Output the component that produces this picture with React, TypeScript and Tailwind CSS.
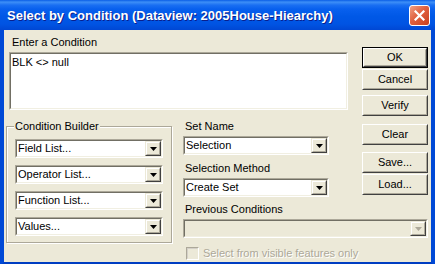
import React from "react";

const F = "font-['Liberation_Sans',Arial,sans-serif]";

function Tri({ disabled }: { disabled?: boolean }) {
  return (
    <svg width="7" height="4" viewBox="0 0 7 4" className="block">
      <path d="M0 0H7L3.5 4Z" fill={disabled ? "#aca899" : "#000"} />
    </svg>
  );
}

function ArrowBtn({ disabled }: { disabled?: boolean }) {
  return (
    <div className="h-full w-[16px] border border-t-[#ece9d8] border-l-[#ece9d8] border-b-[#404040] border-r-[#404040]">
      <div className="flex h-full w-full items-center justify-center border border-t-white border-l-white border-b-[#aca899] border-r-[#aca899] bg-[#ece9d8]">
        <Tri disabled={disabled} />
      </div>
    </div>
  );
}

function Combo({ text, disabled }: { text?: string; disabled?: boolean }) {
  return (
    <div className="flex h-[19px] w-full border border-t-[#aca899] border-l-[#aca899] border-b-white border-r-white">
      <div
        className={`flex min-w-0 flex-1 border border-t-[#716f64] border-l-[#716f64] border-b-[#f1efe2] border-r-[#f1efe2] ${
          disabled ? "bg-[#ece9d8]" : "bg-white"
        }`}
      >
        <div className="min-w-0 flex-1 truncate pl-[1px] text-[11px] leading-[15px] text-black">{text}</div>
        <ArrowBtn disabled={disabled} />
      </div>
    </div>
  );
}

function Btn({ label, def, className = "" }: { label: string; def?: boolean; className?: string }) {
  const inner = (
    <div className="h-full w-full border border-t-white border-l-white border-b-[#404040] border-r-[#404040]">
      <div className="flex h-full w-full items-center justify-center border border-t-[#ece9d8] border-l-[#ece9d8] border-b-[#aca899] border-r-[#aca899] bg-[#ece9d8] text-[11px] text-black">
        {label}
      </div>
    </div>
  );
  return (
    <div className={`h-[21px] w-[66px] ${def ? "border border-black" : ""} ${className}`}>{inner}</div>
  );
}

export default function App() {
  return (
    <div className={`${F} flex h-[264px] w-[435px] flex-col bg-[#0054e3] select-none`}>
      {/* Title bar */}
      <div className="flex h-[30px] shrink-0 items-center bg-[linear-gradient(to_bottom,#0a5ee6_0%,#3d8ff7_7%,#1a6ff2_17%,#0860ee_30%,#0058e6_55%,#0054e3_80%,#0047d4_100%)] pl-[7px] pr-[5px]">
        <div className="flex-1 text-[13px] font-bold leading-none text-white [text-shadow:1px_1px_#0a1f8c]">
          Select by Condition (Dataview: 2005House-Hiearchy)
        </div>
        <div className="flex h-[21px] w-[21px] items-center justify-center rounded-[3px] border border-white bg-[linear-gradient(135deg,#f0a085_0%,#e0603f_45%,#c9401d_100%)]">
          <svg width="11" height="11" viewBox="0 0 11 11">
            <path d="M1.5 1.5L9.5 9.5M9.5 1.5L1.5 9.5" stroke="#fff" strokeWidth="2.2" strokeLinecap="square" />
          </svg>
        </div>
      </div>

      {/* Body */}
      <div className="flex flex-1 border-l-4 border-r-4 border-b-4 border-l-[#0049d6] border-r-[#0049d6] border-b-[#003ec2]">
        <div className="grid flex-1 grid-cols-[166px_11px_165px_14px_66px] grid-rows-[auto_auto_1fr] bg-[#ece9d8] pl-[2px] pt-[6px] text-[11px] leading-[13px] text-black">
          {/* Enter a condition */}
          <div className="col-start-1 col-end-4 row-start-1 flex flex-col">
            <div className="pl-[6px]">Enter a Condition</div>
            <div className="ml-[3px] mt-[3px] h-[58px] border border-t-[#aca899] border-l-[#aca899] border-b-white border-r-white">
              <div className="h-full w-full border border-t-[#716f64] border-l-[#716f64] border-b-[#f1efe2] border-r-[#f1efe2] bg-white pl-[1px] pt-[2px] text-[11px] leading-[13px]">
                BLK &lt;&gt; null
              </div>
            </div>
          </div>

          {/* Buttons */}
          <div className="col-start-5 row-start-1 row-end-3 mt-[11px] flex flex-col">
            <Btn label="OK" def />
            <Btn label="Cancel" className="mt-[1px]" />
            <Btn label="Verify" className="mt-[5px]" />
            <Btn label="Clear" className="mt-[8px]" />
            <Btn label="Save..." className="mt-[7px]" />
            <Btn label="Load..." className="mt-[1px]" />
          </div>

          {/* Condition builder */}
          <fieldset className="col-start-1 row-start-2 row-end-4 mt-[10px] mb-[19px] border border-[#aca899] px-[8px] pb-[6px] shadow-[inset_1px_1px_0_#fff,1px_1px_0_#fff]">
            <legend className="-ml-[1px] bg-[#ece9d8] px-[1px] leading-[13px]">Condition Builder</legend>
            <div className="mt-[6px] flex flex-col gap-[7px]">
              <Combo text="Field List..." />
              <Combo text="Operator List..." />
              <Combo text="Function List..." />
              <Combo text="Values..." />
            </div>
          </fieldset>

          {/* Set name / Selection method */}
          <div className="col-start-3 row-start-2 mt-[10px] flex flex-col pr-[19px]">
            <div className="pl-[2px]">Set Name</div>
            <div className="mt-[3px]">
              <Combo text="Selection" />
            </div>
            <div className="mt-[7px] pl-[2px]">Selection Method</div>
            <div className="mt-[3px]">
              <Combo text="Create Set" />
            </div>
          </div>

          {/* Previous conditions */}
          <div className="col-start-3 col-end-6 row-start-3 mt-[6px] flex flex-col">
            <div className="pl-[2px]">Previous Conditions</div>
            <div className="mt-[3px]">
              <Combo disabled />
            </div>
            <div className="mt-[9px] flex items-center pl-[3px]">
              <div className="h-[13px] w-[13px] border border-t-[#aca899] border-l-[#aca899] border-b-white border-r-white">
                <div className="h-full w-full border border-t-[#d4d0c8] border-l-[#d4d0c8] border-b-[#ece9d8] border-r-[#ece9d8] bg-[#ece9d8]" />
              </div>
              <div className="ml-[4px] text-[#aca899] [text-shadow:1px_1px_#fff]">Select from visible features only</div>
            </div>
          </div>
        </div>
      </div>
    </div>
  );
}
